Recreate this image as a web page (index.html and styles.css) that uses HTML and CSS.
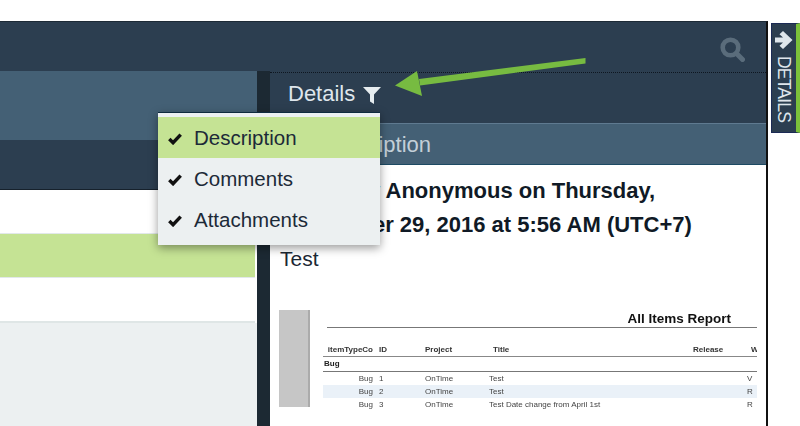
FILE: index.html
```html
<!DOCTYPE html>
<html lang="en">
<head>
<meta charset="utf-8">
<title>Details filter</title>
<link rel="stylesheet" href="styles.css">
</head>
<body>
<div class="stage">
  <main class="window">
    <header class="topbar">
      <svg class="search" viewBox="0 0 25 25" aria-hidden="true"><circle cx="10.500" cy="10.500" r="7.800" fill="none" stroke="currentColor" stroke-width="4.600"/><path d="M16.500 16.500l6 6" stroke="currentColor" stroke-width="5" stroke-linecap="round"/></svg>
    </header>
    <div class="panes">
      <section class="left">
        <div class="left-band"></div>
        <div class="left-dark"></div>
        <div class="row"></div>
        <div class="row row-selected"></div>
        <div class="row row-last"></div>
        <div class="left-rest"></div>
      </section>
      <div class="splitter"></div>
      <section class="right">
        <div class="details-head">
          <span class="details-title">Details</span>
          <svg class="funnel" viewBox="0 0 20 20" aria-hidden="true"><path d="M1 2h18l-7 7.600V19l-4-2.600V9.600z" fill="currentColor"/></svg>
        </div>
        <div class="tab">Description</div>
        <article class="content">
          <h2 class="posted">Added by Anonymous on Thursday, September 29, 2016 at 5:56 AM (UTC+7)</h2>
          <p class="body-text">Test</p>
          <div class="report">
            <div class="report-side"></div>
            <div class="report-main">
              <div class="report-title">All Items Report</div>
              <div class="report-row report-head"><span class="c1 c1-head">itemTypeCo</span><span class="c2">ID</span><span class="c3">Project</span><span class="c4">Title</span><span class="c5">Release</span><span class="c6">W</span></div>
              <div class="report-group">Bug</div>
              <div class="report-row"><span class="c1">Bug</span><span class="c2">1</span><span class="c3">OnTime</span><span class="c4n">Test</span><span class="c5"></span><span class="c6n">V</span></div>
              <div class="report-row report-alt"><span class="c1">Bug</span><span class="c2">2</span><span class="c3">OnTime</span><span class="c4n">Test</span><span class="c5"></span><span class="c6n">R</span></div>
              <div class="report-row"><span class="c1">Bug</span><span class="c2">3</span><span class="c3">OnTime</span><span class="c4n">Test Date change from April 1st</span><span class="c5"></span><span class="c6n">R</span></div>
            </div>
          </div>
        </article>
      </section>
    </div>
    <ul class="menu">
      <li class="menu-item menu-active"><svg class="check" viewBox="0 0 16 14" aria-hidden="true"><path d="M1.500 7.500l4.300 4.300 8.700-9.300" fill="none" stroke="currentColor" stroke-width="3.900"/></svg>Description</li>
      <li class="menu-item"><svg class="check" viewBox="0 0 16 14" aria-hidden="true"><path d="M1.500 7.500l4.300 4.300 8.700-9.300" fill="none" stroke="currentColor" stroke-width="3.900"/></svg>Comments</li>
      <li class="menu-item"><svg class="check" viewBox="0 0 16 14" aria-hidden="true"><path d="M1.500 7.500l4.300 4.300 8.700-9.300" fill="none" stroke="currentColor" stroke-width="3.900"/></svg>Attachments</li>
    </ul>
    <svg class="arrow" viewBox="0 0 192 40" aria-hidden="true"><path d="M190.500 0L24 21l1 6.500L190.500 5.500z" fill="#77bb41"/><path d="M0 27.500L22 13l5 25z" fill="#77bb41"/></svg>
  </main>
  <aside class="side-tab">
    <svg class="side-arrow" viewBox="0 0 20 20" aria-hidden="true"><path d="M1 7.500h8L5.500 4.200 9 1l9.500 9L9 19l-3.500-3.200L9 12.500H1z" fill="currentColor"/></svg>
    <span class="side-label">DETAILS</span>
  </aside>
</div>
</body>
</html>
```
FILE: styles.css
```css
* { box-sizing: border-box; }
html, body { margin: 0; height: 426px; overflow: hidden; background: #fff; }
body { font-family: "Liberation Sans", Arial, sans-serif; color: #1b2733; }
.stage { display: flex; align-items: flex-start; height: 426px; padding-top: 21px; }
.window {
  position: relative; width: 768px; height: 405px; flex: none;
  border-top: 1px solid #1d2a36; border-right: 2px solid #111;
  display: flex; flex-direction: column; background: #fff;
}
.topbar {
  height: 49px; flex: none; background: #2c3e50; display: flex;
  justify-content: flex-end; padding: 15px 21px 0 0;
}
.search { width: 25px; height: 25px; color: #5a6c7b; }
.panes { flex: 1; display: flex; min-height: 0; }
.left { width: 257px; flex: none; display: flex; flex-direction: column; }
.left-band { height: 69px; background: #446075; }
.left-dark { height: 50px; background: #2c3e50; border-bottom: 1px solid #16212c; }
.row { height: 44px; background: #fff; border-bottom: 1px solid #e2e8ea; }
.row-selected { background: #c5e394; margin-right: 2px; }
.row-last { height: 45px; border-bottom: 2px solid #dfe6e6; margin-right: 2px; }
.left-rest { flex: 1; background: #ecf0f1; }
.splitter { width: 13px; flex: none; background: #1c2933; }
.right { flex: 1; min-width: 0; display: flex; flex-direction: column; background: #2c3e50; padding-top: 1px; }
.details-head {
  height: 51px; flex: none; color: #dfe6ec; border-top: 1px dotted #0e1620;
  display: flex; align-items: center; gap: 7px; padding: 0 0 9px 18px;
}
.details-title { font-size: 22px; }
.funnel { width: 20px; height: 20px; margin-top: 2px; color: #e6ecef; }
.tab {
  height: 42px; flex: none; background: #446075; color: #c3cfd8;
  font-size: 22px; line-height: 41px; padding-left: 51px;
  border-top: 1px solid #5f7a90; border-bottom: 1px solid #1d4a63;
}
.content { flex: 1; min-height: 0; padding: 9px 10px 0 10px; background: #fff; overflow: hidden; }
.posted { margin: 0; font-size: 22px; line-height: 34px; font-weight: 700; color: #101a26; width: 460px; }
.body-text { margin: 0; font-size: 21px; line-height: 34px; color: #1b2733; }
.report { display: flex; margin-top: 34px; filter: blur(.35px); }
.report-side { width: 31px; height: 97px; flex: none; background: #c6c6c6; border-right: 2px solid #ababab; margin-left: -1px; }
.report-main { width: 434px; margin-left: 13px; font-size: 8px; color: #444; }
.report-title { font-size: 13.500px; font-weight: 700; color: #111; text-align: right; padding-right: 26px; height: 18px; line-height: 18px; border-bottom: 1px solid #777; margin-left: 4px; }
.report-group { font-weight: 700; color: #222; height: 15px; line-height: 14px; border-bottom: 1px solid #777; padding-left: 1px; }
.report-row { display: flex; height: 13px; line-height: 13px; overflow: hidden; }
.report-row.report-head { font-weight: 700; color: #333; margin-top: 15px; border-bottom: 1px solid #888; height: 14px; }
.report-alt { background: #eaf1f8; }
.c1 { width: 50px; text-align: right; flex: none; }
.c1-head { white-space: nowrap; }
.c2 { width: 52px; padding-left: 6px; flex: none; }
.c3 { width: 68px; flex: none; }
.c4 { width: 200px; flex: none; }
.c4n { width: 200px; margin-left: -4px; margin-right: 4px; flex: none; }
.c5 { width: 58px; flex: none; }
.c6 { flex: none; }
.c6n { flex: none; margin-left: -4px; }
.menu {
  position: absolute; left: 158px; top: 90px; width: 222px; height: 133px;
  margin: 0; padding: 4px 0 0; list-style: none; background: #ecf0f1;
  border-top: 1px solid #0f2a3f; box-shadow: 0 3px 9px rgba(0,0,0,.4); color: #1c2a38;
}
.menu-item { display: flex; align-items: center; height: 41px; font-size: 20.500px; padding-left: 10px; gap: 12px; }
.menu-active { background: #c5e394; }
.check { width: 14px; height: 13px; flex: none; color: #111; margin-top: 2px; }
.arrow { position: absolute; left: 395px; top: 36px; width: 192px; height: 40px; }
.side-tab {
  margin-left: 3px; margin-top: 2px; width: 29px; height: 110px; flex: none;
  background: #2c3e50; color: #dfe6ec; border: 1px solid #1b2a55; border-right: 4px solid #7cc13a;
  display: flex; flex-direction: column; align-items: center; padding-top: 6px; gap: 6px;
}
.side-arrow { width: 20px; height: 20px; flex: none; }
.side-label { writing-mode: vertical-rl; font-size: 17.500px; line-height: 20px; letter-spacing: -.8px; }
```
